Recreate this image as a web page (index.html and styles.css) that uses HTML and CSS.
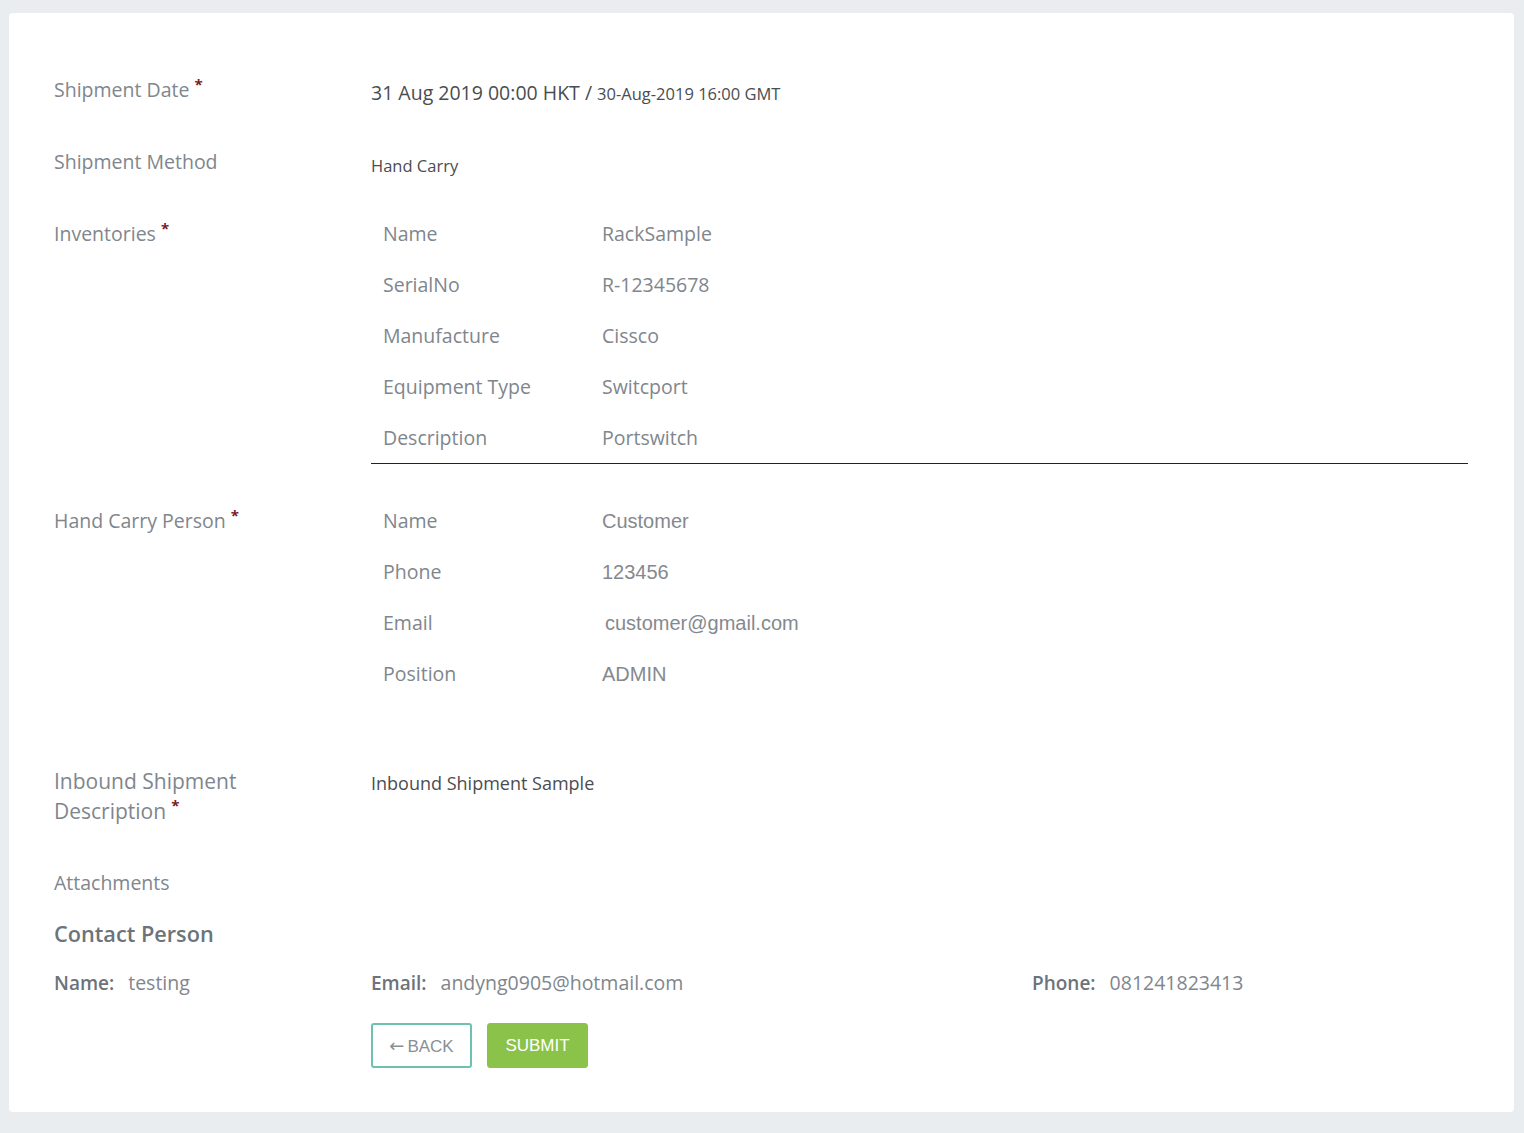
FILE: index.html
```html
<!DOCTYPE html>
<html lang="en">

<head>
	<meta charset="UTF-8">
	<meta name="viewport" content="width=device-width, initial-scale=1.0">
	<title>Inbound Shipment Review</title>
	<link rel="stylesheet" href="styles.css">
</head>

<body>

	<div class="review-card">

		<div class="field-row field-row--single">
			<div class="field-label">Shipment Date<span class="required">*</span></div>
			<div class="field-value value-date">31 Aug 2019 00:00 HKT / <span class="value-gmt">30-Aug-2019 16:00 GMT</span></div>
		</div>

		<div class="field-row field-row--single">
			<div class="field-label">Shipment Method</div>
			<div class="field-value value-small">Hand Carry</div>
		</div>

		<div class="field-row">
			<div class="field-label">Inventories<span class="required">*</span></div>
			<div class="detail-table detail-table--ruled">
				<div class="detail-row"><span class="detail-key">Name</span><span class="detail-val">RackSample</span></div>
				<div class="detail-row"><span class="detail-key">SerialNo</span><span class="detail-val">R-12345678</span></div>
				<div class="detail-row"><span class="detail-key">Manufacture</span><span class="detail-val">Cissco</span></div>
				<div class="detail-row"><span class="detail-key">Equipment Type</span><span class="detail-val">Switcport</span></div>
				<div class="detail-row"><span class="detail-key">Description</span><span class="detail-val">Portswitch</span></div>
			</div>
		</div>

		<div class="field-row field-row--tall">
			<div class="field-label">Hand Carry Person<span class="required">*</span></div>
			<div class="detail-table">
				<div class="detail-row"><span class="detail-key">Name</span><span class="detail-val detail-val--arial">Customer</span></div>
				<div class="detail-row"><span class="detail-key">Phone</span><span class="detail-val detail-val--arial">123456</span></div>
				<div class="detail-row"><span class="detail-key">Email</span><span class="detail-val detail-val--arial detail-val--email">customer@gmail.com</span></div>
				<div class="detail-row"><span class="detail-key">Position</span><span class="detail-val detail-val--arial">ADMIN</span></div>
			</div>
		</div>

		<div class="field-row">
			<div class="field-label field-label--large">Inbound Shipment<br>Description<span class="required">*</span></div>
			<div class="field-value value-desc">Inbound Shipment Sample</div>
		</div>

		<div class="field-row field-row--single field-row--last">
			<div class="field-label">Attachments</div>
			<div class="field-value"></div>
		</div>

		<h2 class="section-title">Contact Person</h2>

		<div class="contact-row">
			<div><b>Name:</b><span>testing</span></div>
			<div><b>Email:</b><span>andyng0905@hotmail.com</span></div>
			<div><b>Phone:</b><span>081241823413</span></div>
		</div>

		<div class="actions">
			<button type="button" class="btn btn-back"><span class="arrow">&larr;</span>BACK</button>
			<button type="button" class="btn btn-submit">SUBMIT</button>
		</div>

	</div>

</body>

</html>
```

FILE: styles.css
```css
body {
	margin: 0;
	padding: 13px 10px 20px 9px;
	background-color: #e9edf0;
	font-family: "Open Sans", "Noto Sans", Arial, sans-serif;
	color: #80868d;
}

.review-card {
	background: #ffffff;
	border-radius: 4px;
	padding: 62px 46px 44px 45px;
}

/* --- Label / value rows --- */
.field-row {
	display: grid;
	grid-template-columns: 317px 1fr;
	margin-bottom: 42px;
}

.field-row--single {
	grid-template-rows: 30px;
}

.field-row--tall {
	margin-bottom: 77px;
}

.field-row--last {
	margin-bottom: 21px;
}

.field-label {
	font-size: 19.5px;
	line-height: 30px;
	color: #80868d;
}

.field-label--large {
	font-size: 21px;
}

.required {
	color: #7b1c24;
	font-size: 15px;
	font-weight: 700;
	vertical-align: top;
	position: relative;
	top: -6px;
	margin-left: 5px;
}

.field-value {
	line-height: 30px;
	color: #4a4d50;
}

.value-date {
	font-size: 19.5px;
	padding-top: 3px;
}

.value-gmt {
	font-size: 16.5px;
}

.value-small {
	font-size: 16.5px;
	padding-top: 4px;
}

.value-desc {
	font-size: 18px;
	padding-top: 2px;
}

/* --- Nested detail tables --- */
.detail-table {
	display: flex;
	flex-direction: column;
	gap: 21px;
}

.detail-table--ruled {
	border-bottom: 1px solid #222;
	padding-bottom: 10px;
}

.detail-row {
	display: grid;
	grid-template-columns: 219px 1fr;
	padding-left: 12px;
	font-size: 19.5px;
	line-height: 30px;
}

.detail-val--arial {
	font-family: "Liberation Sans", Arial, sans-serif;
	font-size: 20px;
	color: #85898e;
}

.detail-val--email {
	padding-left: 3px;
}

/* --- Contact person --- */
.section-title {
	margin: 0 0 19px;
	font-size: 21.7px;
	font-weight: 600;
	line-height: 30px;
	color: #6c737a;
}

.contact-row {
	display: grid;
	grid-template-columns: 317px 661px 1fr;
	font-size: 19.5px;
	line-height: 30px;
}

.contact-row b {
	font-size: 19px;
	font-weight: 600;
	color: #6c737a;
	margin-right: 14px;
}

/* --- Buttons --- */
.actions {
	display: flex;
	gap: 15px;
	margin: 25px 0 0 317px;
}

.btn {
	height: 45px;
	min-width: 101px;
	border-radius: 3px;
	font-family: "Liberation Sans", Arial, sans-serif;
	font-size: 17px;
	cursor: pointer;
}

.btn-back {
	background: #ffffff;
	border: 2px solid #6cc1b1;
	color: #8a8f94;
}

.btn-back .arrow {
	font-family: "DejaVu Sans", sans-serif;
	font-size: 18px;
	margin-right: 3px;
}

.btn-submit {
	background: #8bc34a;
	border: 1px solid #8bc34a;
	color: #ffffff;
}
```
